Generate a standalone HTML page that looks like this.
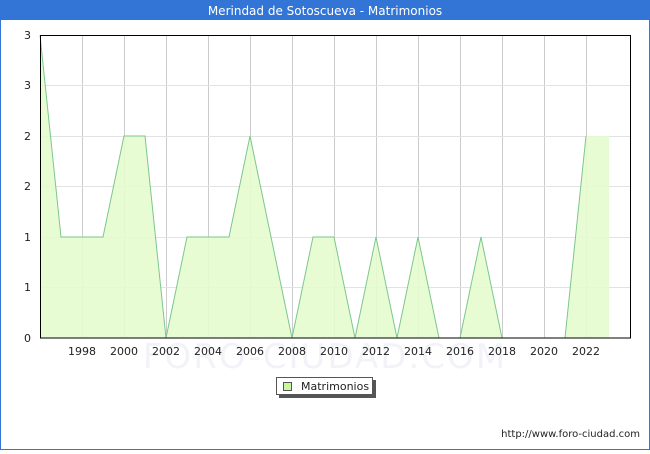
<!DOCTYPE html><html><head><style>
body{margin:0;width:650px;height:450px;font-family:"DejaVu Sans","Liberation Sans",sans-serif;background:#fff;overflow:hidden}
</style></head><body>
<svg width="650" height="450" xmlns="http://www.w3.org/2000/svg" font-family="DejaVu Sans, Liberation Sans, sans-serif">
<rect x="0" y="0" width="650" height="450" fill="#3375d6"/>
<rect x="1" y="20" width="648" height="429" fill="#fff"/>
<text x="325" y="15" fill="#fff" font-size="12" text-anchor="middle">Merindad de Sotoscueva - Matrimonios</text>
<g stroke="#ccc" stroke-width="1">
<line x1="82.5" y1="35" x2="82.5" y2="338"/><line x1="124.5" y1="35" x2="124.5" y2="338"/><line x1="166.5" y1="35" x2="166.5" y2="338"/><line x1="208.5" y1="35" x2="208.5" y2="338"/><line x1="250.5" y1="35" x2="250.5" y2="338"/><line x1="292.5" y1="35" x2="292.5" y2="338"/><line x1="334.5" y1="35" x2="334.5" y2="338"/><line x1="376.5" y1="35" x2="376.5" y2="338"/><line x1="418.5" y1="35" x2="418.5" y2="338"/><line x1="460.5" y1="35" x2="460.5" y2="338"/><line x1="502.5" y1="35" x2="502.5" y2="338"/><line x1="544.5" y1="35" x2="544.5" y2="338"/><line x1="586.5" y1="35" x2="586.5" y2="338"/>
</g>
<g stroke="#e2e2e2"><line x1="40" y1="85.5" x2="630" y2="85.5"/><line x1="40" y1="136.5" x2="630" y2="136.5"/><line x1="40" y1="186.5" x2="630" y2="186.5"/><line x1="40" y1="237.5" x2="630" y2="237.5"/><line x1="40" y1="287.5" x2="630" y2="287.5"/></g>
<text x="325" y="368" font-size="34" fill="#f2f3f8" text-anchor="middle" letter-spacing="2">FORO-CIUDAD.COM</text>
<polygon fill="#e5fccf" fill-opacity="0.9" points="40,338 40,35 61,237 82,237 103,237 124,136 145,136 166,338 187,237 208,237 229,237 250,136 271,237 292,338 313,237 334,237 355,338 376,237 397,338 418,237 439,338 460,338 481,237 502,338 523,338 544,338 565,338 586,136 609,136 609,338"/>
<polyline fill="none" stroke="#7cc68e" stroke-width="1" points="40,35 61,237 82,237 103,237 124,136 145,136 166,338 187,237 208,237 229,237 250,136 271,237 292,338 313,237 334,237 355,338 376,237 397,338 418,237 439,338 460,338 481,237 502,338 523,338 544,338 565,338 586,136"/>
<rect x="40.5" y="35.5" width="590" height="302.5" fill="none" stroke="#000"/>
<g font-size="11" fill="#222" text-anchor="end">
<text x="31" y="39">3</text><text x="31" y="89">3</text><text x="31" y="140">2</text><text x="31" y="190">2</text><text x="31" y="241">1</text><text x="31" y="291">1</text><text x="31" y="342">0</text></g>
<g font-size="11" fill="#222" text-anchor="middle">
<text x="82" y="355">1998</text><text x="124" y="355">2000</text><text x="166" y="355">2002</text><text x="208" y="355">2004</text><text x="250" y="355">2006</text><text x="292" y="355">2008</text><text x="334" y="355">2010</text><text x="376" y="355">2012</text><text x="418" y="355">2014</text><text x="460" y="355">2016</text><text x="502" y="355">2018</text><text x="544" y="355">2020</text><text x="586" y="355">2022</text></g>
<rect x="279" y="380" width="97" height="18" fill="#555"/>
<rect x="276.5" y="377.5" width="96" height="17" fill="#fff" stroke="#555"/>
<rect x="283.5" y="382.5" width="8" height="8" fill="#c8f5a0" stroke="#555"/>
<text x="301" y="390" font-size="11" fill="#222">Matrimonios</text>
<text x="640" y="437" font-size="10" fill="#222" text-anchor="end">http://www.foro-ciudad.com</text>
</svg>
</body></html>
